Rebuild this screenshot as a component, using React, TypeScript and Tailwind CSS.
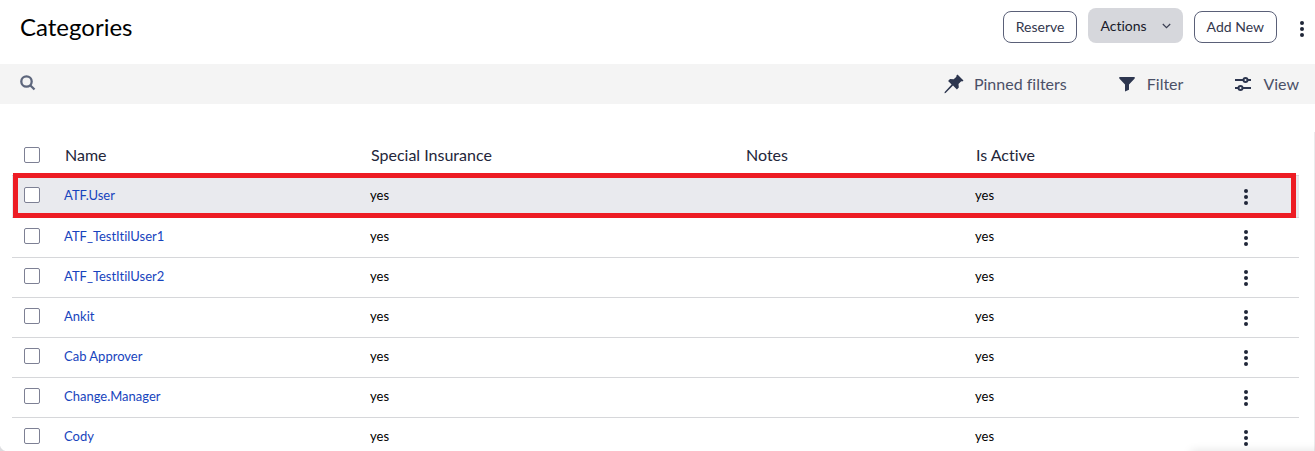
import React from "react";

const rows = ["ATF.User", "ATF_TestItilUser1", "ATF_TestItilUser2", "Ankit", "Cab Approver", "Change.Manager", "Cody"];

function Dots() {
  return (
    <svg width="4" height="16" viewBox="0 0 4 16" fill="#1f2638" aria-hidden="true">
      <circle cx="2" cy="2" r="2" />
      <circle cx="2" cy="8" r="2" />
      <circle cx="2" cy="14" r="2" />
    </svg>
  );
}

function Check({ label }: { label: string }) {
  return (
    <input
      type="checkbox"
      aria-label={label}
      className="block size-4 appearance-none rounded-xs border border-[#7d8094] bg-white checked:bg-[#1f3ca6]"
    />
  );
}

export default function App() {
  return (
    <main className="relative h-screen overflow-hidden bg-white font-['Lato',sans-serif] text-[#0c0d12] [font-variant-ligatures:none]">
      <header className="flex h-16 items-start justify-between pl-5 pr-[11px]">
        <h1 className="pt-[11px] text-2xl leading-8 text-black">Categories</h1>
        <div className="flex items-start gap-[11px] pt-2 text-sm text-[#34384e]">
          <button className="mt-[3px] h-8 rounded-lg border border-[#5a6078] px-3">Reserve</button>
          <button className="flex h-[35px] items-center gap-[15px] rounded-lg bg-[#d6d7dc] px-3 text-[#181a2a]">
            Actions
            <svg width="9" height="6" viewBox="0 0 9 6" fill="none" stroke="#3a3e52" strokeWidth="1.200" aria-hidden="true">
              <path d="M.8 1 4.500 4.600 8.200 1" />
            </svg>
          </button>
          <button className="mt-[3px] h-8 rounded-lg border border-[#5a6078] px-3">Add New</button>
          <button aria-label="More options" className="ml-3 pt-[13px]"><Dots /></button>
        </div>
      </header>

      <div className="flex h-10 items-center justify-between bg-[#f4f4f4] pl-5 pr-4 text-base text-[#4b5067]">
        <button aria-label="Search" className="pb-0.5">
          <svg width="16" height="16" viewBox="0 0 16 16" fill="none" stroke="#5d667c" strokeWidth="2.300" aria-hidden="true">
            <circle cx="6.500" cy="6.500" r="5.200" />
            <path d="m10.200 10.200 4.300 4.300" />
          </svg>
        </button>
        <div className="flex items-center gap-[52px]">
          <button className="flex items-center gap-2.5">
            <svg width="20" height="20" viewBox="0 0 20 20" fill="#2d364f" aria-hidden="true">
              <path d="m13.500.500 6 6-1.200 1-1.100-.2-2.700 2.600.3 3.500-1.900 2-3.900-3.800L1.600 19l-1.100.2.2-1.100 6.900-7.700-3.500-3.500 1.900-1.800 3.700.2 2.700-2.500-.1-1.100z" />
            </svg>
            Pinned filters
          </button>
          <button className="flex items-center gap-3">
            <svg width="16" height="16" viewBox="0 0 16 16" fill="#2d364f" aria-hidden="true">
              <path d="M.3 1h15.400v1.500L10 8.500v5.300L6 15.500v-7L.3 2.500z" />
            </svg>
            Filter
          </button>
          <button className="flex items-center gap-3">
            <svg width="16" height="16" viewBox="0 0 16 16" fill="none" stroke="#2d364f" strokeWidth="2" aria-hidden="true">
              <path d="M0 4h8M13 4h3M0 12h3M8 12h8" />
              <circle cx="10.500" cy="4" r="2" />
              <circle cx="5.500" cy="12" r="2" />
            </svg>
            View
          </button>
        </div>
      </div>

      <section className="pl-3 pr-4 pt-[31px]">
        <table className="w-full table-fixed border-collapse text-left">
          <colgroup>
            <col className="w-10" />
            <col className="w-[306px]" />
            <col className="w-[375px]" />
            <col className="w-[230px]" />
            <col className="w-[230px]" />
            <col className="w-[106px]" />
          </colgroup>
          <thead>
            <tr className="h-10 text-base text-[#23263a]">
              <th className="pl-3"><Check label="Select all" /></th>
              <th className="pl-[13px] font-normal">Name</th>
              <th className="pl-[13px] font-normal">Special Insurance</th>
              <th className="pl-[13px] font-normal">Notes</th>
              <th className="pl-[13px] font-normal">Is Active</th>
              <th aria-label="Row actions" />
            </tr>
          </thead>
          <tbody>
            {rows.map((name, i) => (
              <tr key={name} className="relative h-10 border-b border-[#d6d7da] text-[13px] first:h-[42px] first:border-t first:bg-[#e9eaee]">
                <td className="pb-0.5 pl-3"><Check label={`Select ${name}`} /></td>
                <td className="pl-3"><a href="#" className="text-[#1744bd]">{name}</a></td>
                <td className="pl-3 text-black">yes</td>
                <td />
                <td className="pl-3 text-black">yes</td>
                <td className="pt-0.5">
                  <button aria-label={`Actions for ${name}`} className="flex w-full justify-center"><Dots /></button>
                  {i === 0 && <span className="pointer-events-none absolute -top-[3px] -bottom-0.5 left-px right-[3px] border-5 border-[#ed1c24]" />}
                </td>
              </tr>
            ))}
          </tbody>
        </table>
      </section>
      <span className="absolute right-0 top-[132px] bottom-0 w-px bg-[#ebebed]" />
      <span className="absolute bottom-0 left-0 size-2 bg-radial-[circle_at_top_right] from-transparent from-70% to-[#dcdcdf] to-80%" />
      <span className="absolute -bottom-2 -right-4 h-2 w-[140px] shadow-[0_0_10px_#00000020]" />
    </main>
  );
}
